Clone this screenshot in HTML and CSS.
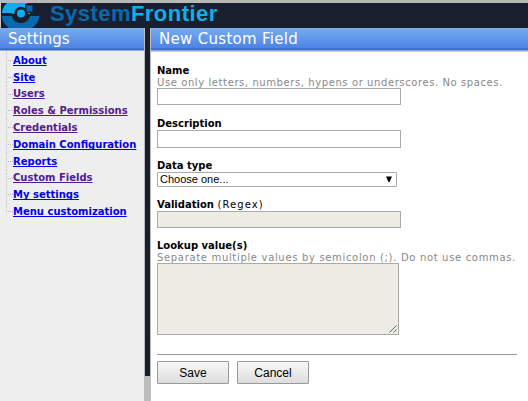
FILE: index.html
```html
<!DOCTYPE html>
<html lang="en">
<head>
<meta charset="utf-8">
<title>System Frontier</title>
<link rel="stylesheet" href="styles.css">
</head>
<body>
<header class="banner">
  <svg class="logo" width="40" height="25" viewBox="0 0 40 25">
    <path d="M1 10 C1 6 3 3 6 0 H26 L24 3 V9 H29 V11 H12 L10 10Z" fill="#10aeec"/>
    <path d="M1 13 H11 C12 18 16 20 20 20 C25 20 28 17 29 13 H38.500 C38 18 35 22 31 25 H8 C4 22 1 18 1 13Z" fill="#0869ad"/>
    <circle cx="20" cy="10.500" r="6.800" fill="#18202f"/>
    <circle cx="20" cy="10.500" r="4" fill="#10aeec"/>
    <rect x="24" y="1" width="9" height="9" fill="#18202f"/>
    <rect x="25.500" y="2.500" width="6" height="6" fill="#0869ad"/>
  </svg>
  <div class="brand"><span class="system">System</span><span class="frontier">Frontier</span></div>
</header>
<div class="layout">
  <aside class="sidebar">
    <h1 class="bar">Settings</h1>
    <ul class="menu">
      <li><a href="#">About</a></li>
      <li><a href="#">Site</a></li>
      <li><a class="visited" href="#">Users</a></li>
      <li><a class="visited" href="#">Roles &amp; Permissions</a></li>
      <li><a class="visited" href="#">Credentials</a></li>
      <li><a href="#">Domain Configuration</a></li>
      <li><a href="#">Reports</a></li>
      <li><a class="visited" href="#">Custom Fields</a></li>
      <li><a href="#">My settings</a></li>
      <li><a href="#">Menu customization</a></li>
    </ul>
  </aside>
  <div class="splitter"><div class="track"></div></div>
  <main class="content">
    <h1 class="bar title">New Custom Field</h1>
    <form class="form">
      <div class="field name">
        <label>Name</label>
        <p class="hint">Use only letters, numbers, hypens or underscores. No spaces.</p>
        <input type="text">
      </div>
      <div class="field description">
        <label>Description</label>
        <input type="text">
      </div>
      <div class="field datatype">
        <label>Data type</label>
        <div class="select"><span>Choose one...</span><svg width="6" height="7" viewBox="0 0 6 7"><path d="M0 0.500H6L3.500 6H2.500Z" fill="#000"/></svg></div>
      </div>
      <div class="field validation">
        <label>Validation <span class="note">(Regex)</span></label>
        <input type="text" disabled>
      </div>
      <div class="field lookup">
        <label>Lookup value(s)</label>
        <p class="hint wide">Separate multiple values by semicolon (;). Do not use commas.</p>
        <div class="textarea"><svg width="8" height="8" viewBox="0 0 8 8"><path d="M0.500 7.500L7.500 0.500M4.500 7.500L7.500 4.500" stroke="#666" fill="none"/></svg></div>
      </div>
      <div class="actions">
        <button type="button">Save</button>
        <button type="button">Cancel</button>
      </div>
    </form>
  </main>
</div>
</body>
</html>
```
FILE: styles.css
```css
* { box-sizing: border-box; }
body {
  margin: 0;
  width: 528px;
  height: 401px;
  overflow: hidden;
  background: #fff;
  font-family: "DejaVu Sans", Verdana, sans-serif;
  font-size: 10px;
}
.banner {
  display: flex;
  height: 28px;
  border-top: 3px solid #b9bab7;
  border-left: 1px solid #c4c4c4;
  background: #18202f;
}
.logo { flex: none; }
.brand {
  margin-left: 9px;
  font: bold 22px/22px "Liberation Sans", Arial, sans-serif;
  letter-spacing: 0.45px;
  white-space: nowrap;
}
.system { color: #0869ad; }
.frontier { color: #10aeec; }
.layout { display: flex; height: 373px; }
.sidebar { width: 144px; background: #eee; }
.bar {
  height: 23px;
  margin: 0;
  padding-left: 8px;
  border-bottom: 1px solid #8db2f2;
  background: linear-gradient(#78adef, #4d83e5 20px, #3c66c3 21px);
  color: #fff;
  font-size: 15px;
  font-weight: normal;
  line-height: 22px;
  white-space: nowrap;
}
.title { letter-spacing: 0.3px; }
.menu {
  margin: 1px 0 0 6px;
  padding: 0;
  list-style: none;
}
.menu li {
  display: flex;
  align-items: center;
  height: 16.8px;
  background:
    repeating-linear-gradient(#c4c4c4 0 1px, transparent 1px 2px) 0 0 / 1px 100% no-repeat,
    repeating-linear-gradient(90deg, #b8b8b8 0 1px, transparent 1px 2px) 0 8px / 7px 1px no-repeat;
}
.menu li:last-child {
  background-size: 1px 9px, 7px 1px;
}
.menu a {
  margin: 1px 0 0 7px;
  color: #00e;
  font-weight: bold;
  line-height: 14px;
  white-space: nowrap;
  text-decoration: underline;
  text-underline-offset: 1px;
  text-decoration-skip-ink: none;
}
.menu .visited { color: #551a8b; }
.splitter {
  width: 7px;
  background: #bcbcbc;
}
.track {
  height: 348px;
  border-left: 1px solid #bcbcbc;
  border-right: 1px solid #bcbcbc;
  background: #18202f;
}
.content { flex: 1; }
.form { border-top: 1px solid #c8c8c8; padding: 13px 0 0 6px; }
.field label {
  display: block;
  height: 12px;
  color: #000;
  font-weight: bold;
  line-height: 12px;
}
.note { font-weight: normal; letter-spacing: 1.1px; }
.hint {
  height: 11px;
  margin: 0;
  color: #888;
  line-height: 12px;
  letter-spacing: 0.59px;
  white-space: nowrap;
}
.wide { letter-spacing: 0.67px; }
.field input {
  display: block;
  width: 244px;
  height: 17px;
  margin: 0;
  padding: 0 3px;
  border: 1px solid #aaa;
  background: #fff;
}
.field input:disabled { background: #eeede5; }
.name { height: 53px; }
.description { height: 42px; }
.description input { height: 18px; }
.datatype { height: 39px; }
.validation { height: 41px; }
.lookup { height: 114px; }
.select {
  display: flex;
  align-items: center;
  justify-content: space-between;
  width: 240px;
  height: 15px;
  padding: 0 4px 0 2px;
  border: 1px solid #aaa;
  border-radius: 1px;
  color: #000;
  font: 11px/13px "Liberation Sans", Arial, sans-serif;
}
.textarea {
  display: flex;
  align-items: flex-end;
  justify-content: flex-end;
  width: 242px;
  height: 72px;
  padding: 1px;
  border: 1px solid #aaa;
  background: #eeede5;
}
.actions {
  display: flex;
  gap: 8px;
  width: 360px;
  padding-top: 6px;
  border-top: 1px solid #999;
}
.actions button {
  width: 72px;
  height: 23px;
  padding: 0;
  border: 1px solid #999;
  border-radius: 1px;
  background: linear-gradient(#f8f8f8, #ddd);
  color: #000;
  font: 12px/20px "Liberation Sans", Arial, sans-serif;
}
```
